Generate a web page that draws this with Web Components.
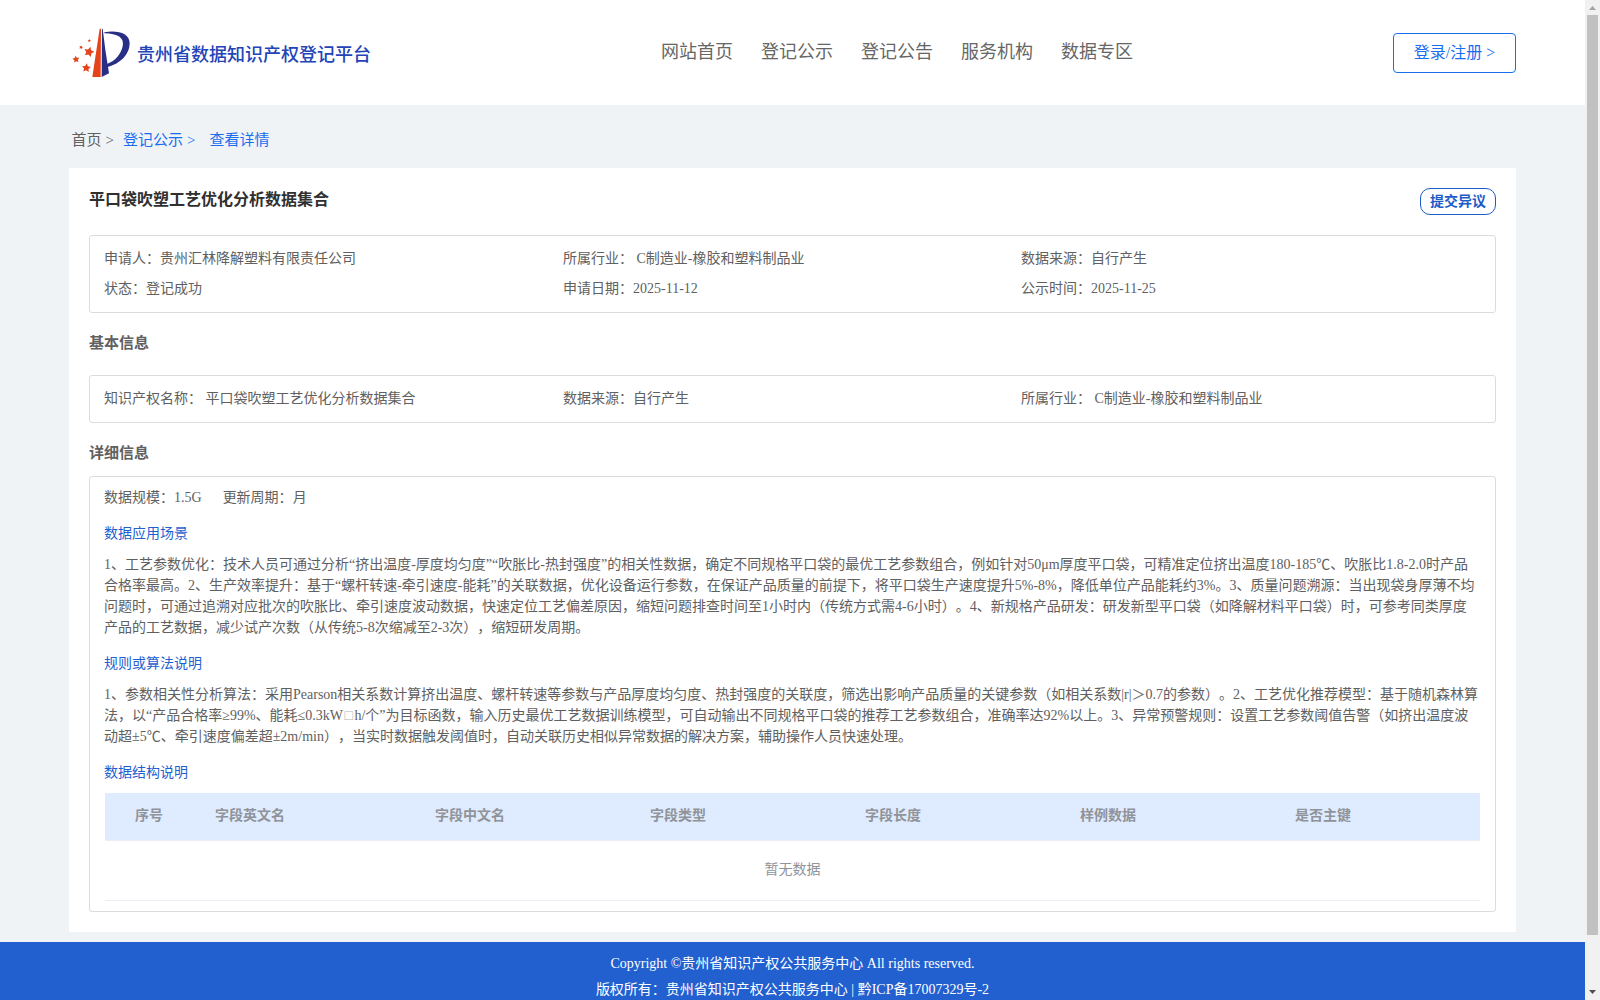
<!DOCTYPE html>
<html lang="zh-CN">
<head>
<meta charset="UTF-8">
<title>贵州省数据知识产权登记平台</title>
<style>
html, body{
    margin: 0;
    height: 100%;
    overflow: hidden;
}
body{
    font-family: "Liberation Serif", "Noto Sans CJK SC", serif;
    font-size: 14px;
    color: #606060;
    background-color: #eff3f6;
    text-spacing-trim: space-all;
}
.missing{
    margin: 0 1.5px;
    color: #b4b4b4;
}
</style>
</head>
<body>

<app-page>
    <site-header slot="header">
        <nav-item>网站首页</nav-item>
        <nav-item>登记公示</nav-item>
        <nav-item>登记公告</nav-item>
        <nav-item>服务机构</nav-item>
        <nav-item>数据专区</nav-item>
    </site-header>

    <bread-crumb></bread-crumb>

    <detail-card name="平口袋吹塑工艺优化分析数据集合">
        <info-box style="height: 76px">
            <info-item label="申请人：">贵州汇林降解塑料有限责任公司</info-item>
            <info-item label="所属行业：">&nbsp;C制造业-橡胶和塑料制品业</info-item>
            <info-item label="数据来源：">自行产生</info-item>
            <info-item label="状态：">登记成功</info-item>
            <info-item label="申请日期：">2025-11-12</info-item>
            <info-item label="公示时间：">2025-11-25</info-item>
        </info-box>

        <section-title style="height: 62px">基本信息</section-title>
        <info-box style="height: 46px">
            <info-item label="知识产权名称：">&nbsp;平口袋吹塑工艺优化分析数据集合</info-item>
            <info-item label="数据来源：">自行产生</info-item>
            <info-item label="所属行业：">&nbsp;C制造业-橡胶和塑料制品业</info-item>
        </info-box>

        <section-title style="height: 53px">详细信息</section-title>
        <detail-box>
            <info-item label="数据规模：" slot="meta">1.5G</info-item>
            <info-item label="更新周期：" slot="meta">月</info-item>
            <text-block label="数据应用场景">
                <text-line>1、工艺参数优化：技术人员可通过分析“挤出温度-厚度均匀度”“吹胀比-热封强度”的相关性数据，确定不同规格平口袋的最优工艺参数组合，例如针对50μm厚度平口袋，可精准定位挤出温度180-185℃、吹胀比1.8-2.0时产品</text-line>
                <text-line>合格率最高。2、生产效率提升：基于“螺杆转速-牵引速度-能耗”的关联数据，优化设备运行参数，在保证产品质量的前提下，将平口袋生产速度提升5%-8%，降低单位产品能耗约3%。3、质量问题溯源：当出现袋身厚薄不均</text-line>
                <text-line>问题时，可通过追溯对应批次的吹胀比、牵引速度波动数据，快速定位工艺偏差原因，缩短问题排查时间至1小时内（传统方式需4-6小时）。4、新规格产品研发：研发新型平口袋（如降解材料平口袋）时，可参考同类厚度</text-line>
                <text-line>产品的工艺数据，减少试产次数（从传统5-8次缩减至2-3次），缩短研发周期。</text-line>
            </text-block>
            <text-block label="规则或算法说明">
                <text-line>1、参数相关性分析算法：采用Pearson相关系数计算挤出温度、螺杆转速等参数与产品厚度均匀度、热封强度的关联度，筛选出影响产品质量的关键参数（如相关系数|r|＞0.7的参数）。2、工艺优化推荐模型：基于随机森林算</text-line>
                <text-line>法，以“产品合格率≥99%、能耗≤0.3kW<span class="missing">□</span>h/个”为目标函数，输入历史最优工艺数据训练模型，可自动输出不同规格平口袋的推荐工艺参数组合，准确率达92%以上。3、异常预警规则：设置工艺参数阈值告警（如挤出温度波</text-line>
                <text-line>动超±5℃、牵引速度偏差超±2m/min），当实时数据触发阈值时，自动关联历史相似异常数据的解决方案，辅助操作人员快速处理。</text-line>
            </text-block>
            <text-block label="数据结构说明">
                <field-table></field-table>
            </text-block>
        </detail-box>
    </detail-card>

    <site-footer slot="footer"></site-footer>
    <scroll-rail slot="rail"></scroll-rail>
</app-page>

<script>
function define(tag, html, init){
    const template = document.createElement('template')
    template.innerHTML = html
    customElements.define(tag, class extends HTMLElement {
        constructor(){
            super()
            this.root = this.attachShadow({mode:'open'})
            this.root.appendChild(template.content.cloneNode(true))
        }
        connectedCallback(){
            if(init) init(this, this.root)
        }
    })
}

define('app-page', `
<style>
:host{
    display: grid;
    grid-template-columns: 1fr 15px;
    height: 1000px;
    overflow: hidden;
}
.view{
    display: flex;
    flex-direction: column;
    min-width: 0;
    overflow: hidden;
}
main{
    padding: 0 69px 10px;
}
</style>
<div class="view">
    <slot name="header"></slot>
    <main><slot></slot></main>
    <slot name="footer"></slot>
</div>
<slot name="rail"></slot>
`)

define('site-header', `
<style>
:host{
    display: grid;
    grid-template-columns: 589px auto 1fr;
    align-items: center;
    box-sizing: border-box;
    height: 105px;
    flex: none;
    padding: 0 69px 0 72px;
    background-color: #fff;
}
nav{
    display: flex;
    gap: 28px;
    margin: 0 0 1px 0;
}
site-logo{
    justify-self: start;
}
login-button{
    justify-self: end;
}
</style>
<site-logo></site-logo>
<nav><slot></slot></nav>
<login-button></login-button>
`)

define('site-logo', `
<style>
:host{
    display: flex;
    align-items: center;
    gap: 8px;
    white-space: nowrap;
    color: #2244b8;
    font-size: 18px;
    font-weight: 500;
    line-height: 26px;
}
svg{
    display: block;
    width: 58px;
    height: 50px;
    margin-top: 1px;
}
span{
    margin: 4px 0 0 -1px;
}
</style>
<svg viewBox="66 55 174 150">
    <g class="stars" fill="#e5431a"></g>
    <path fill="#e5431a" d="M149 57h4l-1 145h-25z"/>
    <path fill="#2a2f86" d="M156 57h2l8 63 11 71-22 11z"/>
    <path fill="#2a2f86" d="M163 68C203 61 239 71 239 101C239 133 213 162 171 173V163C197 154 213 132 218 110C224 84 203 72 163 71z"/>
</svg>
<span>贵州省数据知识产权登记平台</span>
`, (el, root) => {
    // x, y, radius, turn
    const stars = [[117, 127, 16, 15], [78, 149, 11, -8], [109, 175, 14, 5], [93, 113, 6, 20], [118, 93, 5, 0]]
    const g = root.querySelector('.stars')
    stars.forEach(([x, y, r, turn]) => {
        const points = []
        for(let i = 0; i < 10; i++){
            const a = (i * 36 - 90 + turn) * Math.PI / 180
            const d = i % 2 ? r * 0.5 : r
            points.push((x + d * Math.cos(a)).toFixed(1) + ',' + (y + d * Math.sin(a)).toFixed(1))
        }
        const star = document.createElementNS('http://www.w3.org/2000/svg', 'polygon')
        star.setAttribute('points', points.join(' '))
        g.append(star)
    })
})

define('nav-item', `
<style>
:host{
    display: block;
    color: #666;
    font-size: 18px;
    line-height: 26px;
    white-space: nowrap;
}
</style>
<slot></slot>
`)

define('login-button', `
<style>
:host{
    display: block;
    box-sizing: border-box;
    width: 123px;
    height: 40px;
    margin-top: 1px;
    border: 1px solid #1a6eee;
    border-radius: 4px;
    color: #1a6eee;
    font-size: 16px;
    line-height: 38px;
    text-align: center;
    white-space: nowrap;
}
</style>
登录/注册 &gt;
`)

define('bread-crumb', `
<style>
:host{
    display: flex;
    height: 63px;
    padding-left: 2.5px;
    font-size: 15px;
    line-height: 71px;
    white-space: nowrap;
}
.sep{
    margin-left: 4px;
}
.link{
    color: #1a6eee;
}
.second{
    margin-left: 9px;
}
.third{
    margin-left: 14px;
}
</style>
<span>首页</span><span class="sep">&gt;</span>
<span class="link second">登记公示</span><span class="link sep">&gt;</span>
<span class="link third">查看详情</span>
`)

define('detail-card', `
<style>
:host{
    display: block;
    box-sizing: border-box;
    height: 764px;
    padding: 20px;
    background-color: #fff;
}
.head{
    display: flex;
    justify-content: space-between;
    align-items: flex-start;
    height: 47px;
}
h1{
    margin: 0;
    color: #303030;
    font-size: 16px;
    line-height: 23px;
}
.objection{
    box-sizing: border-box;
    width: 76px;
    height: 27px;
    border: 1px solid #1c5cc8;
    border-radius: 10px;
    color: #1c5cc8;
    font-weight: bold;
    line-height: 25px;
    text-align: center;
}
</style>
<div class="head">
    <h1></h1>
    <div class="objection">提交异议</div>
</div>
<slot></slot>
`, (el, root) => {
    root.querySelector('h1').textContent = el.getAttribute('name')
})

define('section-title', `
<style>
:host{
    display: block;
    font-size: 15px;
    font-weight: bold;
    line-height: 61px;
}
</style>
<slot></slot>
`)

define('info-box', `
<style>
:host{
    display: grid;
    grid-template-columns: 459px 458px 1fr;
    grid-auto-rows: 30px;
    box-sizing: content-box;
    padding: 0 14px;
    border: 1px solid #dcdcdc;
    border-radius: 3px;
    align-content: start;
}
::slotted(*){
    margin-top: 8px;
    margin-bottom: -8px;
}
</style>
<slot></slot>
`)

define('info-item', `
<style>
:host{
    display: block;
    line-height: 29px;
    white-space: nowrap;
}
</style>
<span></span><slot></slot>
`, (el, root) => {
    root.querySelector('span').textContent = el.getAttribute('label')
})

define('detail-box', `
<style>
:host{
    display: block;
    box-sizing: border-box;
    height: 436px;
    padding: 6px 15px 0 14px;
    border: 1px solid #dcdcdc;
    border-radius: 3px;
}
.meta{
    display: flex;
    gap: 21px;
}
</style>
<div class="meta"><slot name="meta"></slot></div>
<slot></slot>
`)

define('text-block', `
<style>
:host{
    display: block;
    padding-top: 11px;
}
h3{
    margin: 0;
    color: #1f5fcf;
    font-size: 14px;
    font-weight: normal;
    line-height: 21px;
    padding: 0 0 10px;
}
:host(:not(:last-child)){
    padding-bottom: 4px;
}
</style>
<h3></h3>
<slot></slot>
`, (el, root) => {
    root.querySelector('h3').textContent = el.getAttribute('label')
})

define('text-line', `
<style>
:host{
    display: block;
    line-height: 21px;
    white-space: nowrap;
}
</style>
<slot></slot>
`)

define('field-table', `
<style>
:host{
    display: block;
    margin-left: 1px;
    color: #909399;
}
.head{
    display: grid;
    grid-template-columns: 100px 220px repeat(4, 215px) 1fr;
    height: 47px;
    border-bottom: 1px solid #ebeef5;
    background-color: #dfecff;
    font-weight: bold;
    line-height: 46px;
}
.head span{
    padding-left: 10px;
}
.head span:first-child{
    padding-left: 30px;
}
.empty{
    height: 59px;
    border-bottom: 1px solid #ebeef5;
    line-height: 58px;
    text-align: center;
}
</style>
<div class="head"></div>
<div class="empty">暂无数据</div>
`, (el, root) => {
    const head = root.querySelector('.head')
    const names = ['序号', '字段英文名', '字段中文名', '字段类型', '字段长度', '样例数据', '是否主键']
    names.forEach(name => {
        const span = document.createElement('span')
        span.innerText = name
        head.append(span)
    })
})

define('site-footer', `
<style>
:host{
    display: block;
    flex: 1;
    padding-top: 9px;
    background-color: #2260cf;
    color: #fff;
    line-height: 26px;
    text-align: center;
}
</style>
<div>Copyright ©贵州省知识产权公共服务中心 All rights reserved.</div>
<div>版权所有：贵州省知识产权公共服务中心 | 黔ICP备17007329号-2</div>
`)

define('scroll-rail', `
<style>
:host{
    display: flex;
    flex-direction: column;
    align-items: center;
    background-color: #f1f1f1;
}
svg{
    display: block;
    width: 15px;
    height: 15px;
}
.thumb{
    width: 11px;
    height: 920px;
    background-color: #c1c1c1;
}
.down{
    margin-top: auto;
}
</style>
<svg viewBox="0 0 15 15"><path fill="#a3a3a3" d="M4 10l3.5-4 3.5 4z"/></svg>
<div class="thumb"></div>
<svg class="down" viewBox="0 0 15 15"><path fill="#505050" d="M4 5h7l-3.500 4z"/></svg>
`)
</script>
</body>
</html>
